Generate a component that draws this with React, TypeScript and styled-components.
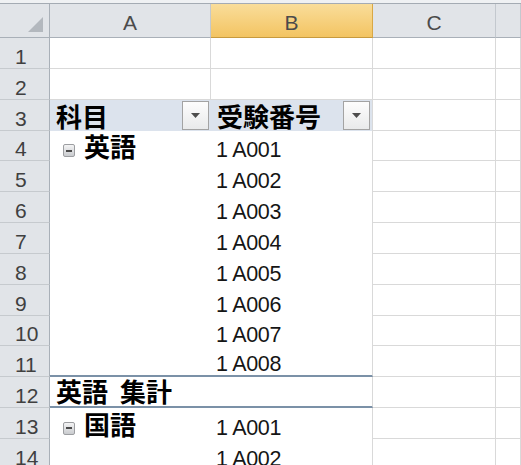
import React from "react";
import styled, { createGlobalStyle } from "styled-components";

const Global = createGlobalStyle`
  html, body { margin: 0; padding: 0; background: #ffffff; }
  body { width: 521px; height: 465px; overflow: hidden; font-family: "Liberation Sans", Arial, sans-serif; }
`;

const GRID = "#d9d9d9";
const PIVOT_LINE = "#7b91a7";
const HEAD_BG = "#e1e4e8";
const HEAD_LINE = "#a9b0b8";

const Page = styled.div`
  width: 521px;
  height: 465px;
  overflow: hidden;
  display: flex;
  flex-direction: column;
`;

const TopStrip = styled.div`
  height: 3px;
  flex: none;
  background: #eff1f3;
  border-bottom: 1px solid #a4abb3;
`;

const Sheet = styled.div`
  display: grid;
  grid-template-columns: 50px 161px 162px 123px 25px;
  grid-template-rows: 34px;
  grid-auto-rows: 30.85px;
`;

const Corner = styled.div`
  background: ${HEAD_BG};
  border-right: 1px solid ${HEAD_LINE};
  border-bottom: 1px solid ${HEAD_LINE};
  box-sizing: border-box;
  display: flex;
  justify-content: flex-end;
  align-items: flex-end;
  padding: 0 6px 5px 0;
`;

const ColHeader = styled.div<{ $selected?: boolean }>`
  box-sizing: border-box;
  background: ${(p) =>
    p.$selected ? "linear-gradient(#f9dd9a, #f3c462)" : HEAD_BG};
  border-right: 1px solid ${(p) => (p.$selected ? "#d9a845" : "#c3c8ce")};
  border-bottom: 1px solid ${(p) => (p.$selected ? "#c79a3e" : HEAD_LINE)};
  display: flex;
  align-items: flex-end;
  justify-content: center;
  padding-bottom: 3px;
  font-size: 21px;
  line-height: 23px;
  color: #4b4b4b;
`;

const RowHeader = styled.div`
  box-sizing: border-box;
  background: ${HEAD_BG};
  border-right: 1px solid ${HEAD_LINE};
  border-bottom: 1px solid #c6cace;
  display: flex;
  align-items: flex-end;
  padding: 0 0 0 15px;
  font-size: 21px;
  line-height: 23px;
  color: #404040;
`;

const Cell = styled.div<{
  $bg?: string;
  $right?: string;
  $bottom?: string;
  $bottomWidth?: number;
}>`
  box-sizing: border-box;
  background: ${(p) => p.$bg || "#ffffff"};
  border-right: ${(p) => (p.$right ? `1px solid ${p.$right}` : "none")};
  border-bottom: ${(p) =>
    p.$bottom ? `${p.$bottomWidth || 1}px solid ${p.$bottom}` : "none"};
  display: flex;
  align-items: flex-end;
  padding: 0 2px 0 6px;
  min-width: 0;
  overflow: visible;
  white-space: nowrap;
`;

const Value = styled.span`
  font-family: "Liberation Sans", Arial, sans-serif;
  font-size: 21.5px;
  line-height: 21px;
  color: #151515;
  letter-spacing: -0.3px;
  margin-left: -1px;
`;

const Label = styled.span`
  font-family: "Noto Sans CJK JP", "Noto Sans CJK SC", sans-serif;
  font-weight: 700;
  font-size: 26px;
  line-height: 26px;
  color: #000000;
  word-spacing: 6px;
  margin-bottom: 2px;
`;

const DropButton = styled.div`
  margin-left: auto;
  align-self: center;
  width: 27px;
  height: 29px;
  box-sizing: border-box;
  border: 1px solid #a3a3a3;
  background: linear-gradient(#fdfdfd, #e9eaeb);
  display: flex;
  align-items: center;
  justify-content: center;
`;

const Toggle = styled.span`
  width: 12px;
  height: 13px;
  box-sizing: border-box;
  border: 1px solid #9c9ea1;
  border-radius: 2px;
  background: linear-gradient(#f4f4f5, #c9cbce);
  margin: 0 9px 4px 7px;
  display: flex;
  align-items: center;
  justify-content: center;
  &::after {
    content: "";
    width: 6px;
    height: 2px;
    background: #4a4a4a;
  }
`;

const Triangle = () => (
  <svg width="15" height="15" viewBox="0 0 15 15">
    <polygon points="15,0 15,15 0,15" fill="#b3b8be" />
  </svg>
);

const DropArrow = () => (
  <svg width="9" height="5" viewBox="0 0 9 5">
    <polygon points="0,0 9,0 4.5,5" fill="#4d4d4d" />
  </svg>
);

type RowSpec = {
  a?: React.ReactNode;
  b?: React.ReactNode;
  aBg?: string;
  bBg?: string;
  aRight?: string;
  bRight?: string;
  bottom?: string;
  bottomWidth?: number;
};

const dataRows: RowSpec[] = [
  { aRight: GRID, bRight: GRID, bottom: GRID },
  { aRight: GRID, bRight: GRID, bottom: GRID },
  {
    a: (
      <>
        <Label>科目</Label>
        <DropButton>
          <DropArrow />
        </DropButton>
      </>
    ),
    b: (
      <>
        <Label>受験番号</Label>
        <DropButton>
          <DropArrow />
        </DropButton>
      </>
    ),
    aBg: "#dce3ed",
    bBg: "#dce3ed",
    bRight: GRID,
  },
  {
    a: (
      <>
        <Toggle />
        <Label>英語</Label>
      </>
    ),
    b: <Value>1 A001</Value>,
    bRight: GRID,
  },
  { b: <Value>1 A002</Value>, bRight: GRID },
  { b: <Value>1 A003</Value>, bRight: GRID },
  { b: <Value>1 A004</Value>, bRight: GRID },
  { b: <Value>1 A005</Value>, bRight: GRID },
  { b: <Value>1 A006</Value>, bRight: GRID },
  { b: <Value>1 A007</Value>, bRight: GRID },
  {
    b: <Value>1 A008</Value>,
    bRight: GRID,
    bottom: PIVOT_LINE,
    bottomWidth: 2,
  },
  {
    a: <Label>英語 集計</Label>,
    bRight: GRID,
    bottom: PIVOT_LINE,
    bottomWidth: 2,
  },
  {
    a: (
      <>
        <Toggle />
        <Label>国語</Label>
      </>
    ),
    b: <Value>1 A001</Value>,
    bRight: GRID,
  },
  { b: <Value>1 A002</Value>, bRight: GRID },
];

export default function App() {
  return (
    <Page>
      <Global />
      <TopStrip />
      <Sheet>
        <Corner>
          <Triangle />
        </Corner>
        <ColHeader>A</ColHeader>
        <ColHeader $selected>B</ColHeader>
        <ColHeader>C</ColHeader>
        <ColHeader />
        {dataRows.map((r, i) => (
          <React.Fragment key={i}>
            <RowHeader>{i + 1}</RowHeader>
            <Cell
              $bg={r.aBg}
              $right={r.aRight}
              $bottom={r.bottom}
              $bottomWidth={r.bottomWidth}
            >
              {r.a}
            </Cell>
            <Cell
              $bg={r.bBg}
              $right={r.bRight}
              $bottom={r.bottom}
              $bottomWidth={r.bottomWidth}
            >
              {r.b}
            </Cell>
            <Cell $right={GRID} $bottom={GRID} />
            <Cell $right={GRID} $bottom={GRID} />
          </React.Fragment>
        ))}
      </Sheet>
    </Page>
  );
}
